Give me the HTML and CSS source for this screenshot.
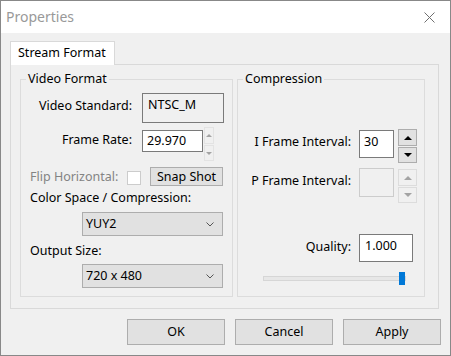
FILE: index.html
```html
<!doctype html>
<html lang="en">

<head>
    <meta charset="UTF-8" />
    <title>Properties</title>
    <link rel="stylesheet" href="styles.css">
</head>

<body>
    <div class="window">
        <div class="titlebar">
            <span class="titlebar__title">Properties</span>
            <svg class="titlebar__close" width="11" height="11" viewBox="0 0 11 11">
                <path d="M0.5 0.5L10.5 10.5M10.5 0.5L0.5 10.5" stroke="#6f6f6f" fill="none" />
            </svg>
        </div>
        <div class="client">
            <div class="tabs">
                <div class="tab">Stream Format</div>
            </div>
            <div class="page">
                <div class="group group--video">
                    <div class="group__title">Video Format</div>
                    <div class="row row--standard">
                        <span class="label label--video">Video Standard:</span>
                        <div class="field field--readonly">NTSC_M</div>
                    </div>
                    <div class="row row--rate">
                        <span class="label label--video">Frame Rate:</span>
                        <div class="field field--rate">29.970</div>
                        <div class="spin spin--small spin--disabled">
                            <span class="spin__btn spin__btn--up"></span>
                            <span class="spin__btn spin__btn--down"></span>
                        </div>
                    </div>
                    <div class="row row--flip">
                        <span class="label label--flip">Flip Horizontal:</span>
                        <span class="checkbox"></span>
                        <button class="button button--snap">Snap Shot</button>
                    </div>
                    <div class="label label--block label--color">Color Space / Compression:</div>
                    <div class="combo combo--color">
                        <span>YUY2</span>
                        <svg width="8" height="5" viewBox="0 0 8 5">
                            <path d="M0.5 0.5L4 4L7.5 0.5" stroke="#555" fill="none" />
                        </svg>
                    </div>
                    <div class="label label--block label--output">Output Size:</div>
                    <div class="combo combo--output">
                        <span>720 x 480</span>
                        <svg width="8" height="5" viewBox="0 0 8 5">
                            <path d="M0.5 0.5L4 4L7.5 0.5" stroke="#555" fill="none" />
                        </svg>
                    </div>
                </div>
                <div class="group group--compression">
                    <div class="group__title">Compression</div>
                    <div class="row row--iframe">
                        <span class="label label--comp">I Frame Interval:</span>
                        <div class="field field--interval">30</div>
                        <div class="spin">
                            <span class="spin__btn spin__btn--up"></span>
                            <span class="spin__btn spin__btn--down"></span>
                        </div>
                    </div>
                    <div class="row row--pframe">
                        <span class="label label--comp">P Frame Interval:</span>
                        <div class="field field--interval field--disabled"></div>
                        <div class="spin spin--disabled">
                            <span class="spin__btn spin__btn--up"></span>
                            <span class="spin__btn spin__btn--down"></span>
                        </div>
                    </div>
                    <div class="row row--quality">
                        <span class="label label--comp">Quality:</span>
                        <div class="field field--quality">1.000</div>
                    </div>
                    <div class="slider">
                        <span class="slider__thumb"></span>
                    </div>
                </div>
            </div>
            <div class="buttons">
                <button class="button button--dialog">OK</button>
                <button class="button button--dialog">Cancel</button>
                <button class="button button--dialog">Apply</button>
            </div>
        </div>
    </div>
</body>

</html>
```

FILE: styles.css
```css
* {
    margin: 0;
    padding: 0;
    box-sizing: border-box;
}

body {
    font-family: 'Noto Sans', 'Liberation Sans', sans-serif;
    font-size: 12.5px;
    line-height: 16px;
    color: #000;
    background: #f0f0f0;
}

.window {
    width: 451px;
    height: 356px;
    border: 1px solid #888;
    display: flex;
    flex-direction: column;
    background: #f0f0f0;
}

.titlebar {
    flex: none;
    height: 32px;
    background: #fff;
    display: flex;
    align-items: center;
    justify-content: space-between;
    padding: 0 15px 0 5px;
}

.titlebar__title {
    font-size: 14px;
    color: #999;
}

.titlebar__close {
    display: block;
}

.client {
    flex: 1;
    padding: 8px 9px 0 9px;
}

.tabs {
    display: flex;
}

.tab {
    position: relative;
    z-index: 1;
    width: 105px;
    height: 24px;
    margin-bottom: -1px;
    padding: 3px 0 0 7px;
    background: #fff;
    border: 1px solid #d9d9d9;
    border-bottom: 0;
}

.page {
    height: 245px;
    margin-right: 2px;
    border: 1px solid #d9d9d9;
    padding: 14px 13px 11px 9px;
    display: flex;
    gap: 4px;
}

.group {
    border: 1px solid #dcdcdc;
}

.group--video {
    width: 213px;
}

.group--compression {
    flex: 1;
}

.group__title {
    width: max-content;
    margin: -9px 0 0 5px;
    padding: 0 2px;
    background: #f0f0f0;
}

.row {
    display: flex;
    align-items: flex-start;
}

.label {
    white-space: nowrap;
}

.label--video {
    width: 111px;
    text-align: right;
    margin-top: 5px;
}

.label--comp {
    width: 113px;
    text-align: right;
    margin-top: 5px;
}

.label--flip {
    width: 97px;
    margin: 2px 0 0 9px;
    color: #838383;
}

.label--block {
    margin-left: 9px;
}

.label--color {
    margin-top: 4px;
}

.label--output {
    margin-top: 7px;
}

.field {
    border: 1px solid #7a7a7a;
    background: #fff;
}

.row--standard {
    margin-top: 6px;
}

.field--readonly {
    margin-left: 10px;
    width: 82px;
    height: 30px;
    padding: 3px 5px 0;
    background: #f0f0f0;
}

.row--rate {
    margin-top: 4px;
}

.field--rate {
    margin: 3px 0 0 10px;
    width: 61px;
    height: 22px;
    padding: 2px 4px 0;
}

.spin {
    display: flex;
    flex-direction: column;
    gap: 1px;
    width: 19px;
    margin-left: 4px;
}

.spin__btn {
    display: flex;
    align-items: center;
    justify-content: center;
    height: 16px;
    border: 1px solid #adadad;
    background: #e1e1e1;
}

.spin__btn--up {
    height: 17px;
}

.spin__btn::before {
    content: '';
    border-left: 4px solid transparent;
    border-right: 4px solid transparent;
}

.spin__btn--up::before {
    border-bottom: 4px solid #000;
}

.spin__btn--down::before {
    border-top: 4px solid #000;
}

.spin--disabled .spin__btn {
    border-color: #dcdcdc;
    background: #f0f0f0;
}

.spin--disabled .spin__btn--up::before {
    border-bottom-color: #a3a3a3;
}

.spin--disabled .spin__btn--down::before {
    border-top-color: #a3a3a3;
}

.spin--small {
    width: 10px;
    margin-left: 1px;
}

.spin--small .spin__btn {
    border-color: #e3e3e3;
}

.spin--small .spin__btn::before {
    border-left-width: 3px;
    border-right-width: 3px;
    border-bottom-width: 3px;
    border-top-width: 3px;
}

.row--flip {
    margin-top: 6px;
}

.checkbox {
    width: 14px;
    height: 14px;
    margin-top: 4px;
    border: 1px solid #ccc;
    background: #fff;
}

.button {
    font-family: inherit;
    font-size: 12.5px;
    line-height: 16px;
    color: #000;
    background: #e1e1e1;
    border: 1px solid #adadad;
}

.button--snap {
    width: 73px;
    height: 19px;
    margin-left: 9px;
}

.combo {
    display: flex;
    align-items: center;
    justify-content: space-between;
    width: 141px;
    height: 24px;
    margin-left: 61px;
    padding: 0 8px 0 3px;
    background: #e1e1e1;
    border: 1px solid #adadad;
}

.combo--color {
    margin-top: 6px;
}

.combo--output {
    margin-top: 5px;
}

.row--iframe {
    margin-top: 42px;
}

.field--interval {
    margin: 1px 0 0 8px;
    width: 35px;
    height: 28px;
    padding: 3px 4px 0;
}

.row--pframe {
    margin-top: 5px;
}

.row--pframe .field {
    margin-top: 0;
    height: 29px;
}

.row--pframe .spin {
    margin-top: 1px;
}

.field--disabled {
    border-color: #ccc;
    background: #f0f0f0;
}

.row--quality {
    margin-top: 31px;
}

.field--quality {
    margin-left: 8px;
    width: 54px;
    height: 28px;
    padding: 3px 5px 0;
}

.slider {
    display: flex;
    align-items: center;
    justify-content: flex-end;
    width: 143px;
    height: 5px;
    margin: 14px 0 0 25px;
    background: #e7e7e7;
    border: 1px solid #d6d6d6;
}

.slider__thumb {
    flex: none;
    width: 6px;
    height: 13px;
    background: #0078d7;
}

.buttons {
    display: flex;
    justify-content: flex-end;
    gap: 10px;
    margin-top: 10px;
}

.button--dialog {
    width: 98px;
    height: 26px;
}
```
